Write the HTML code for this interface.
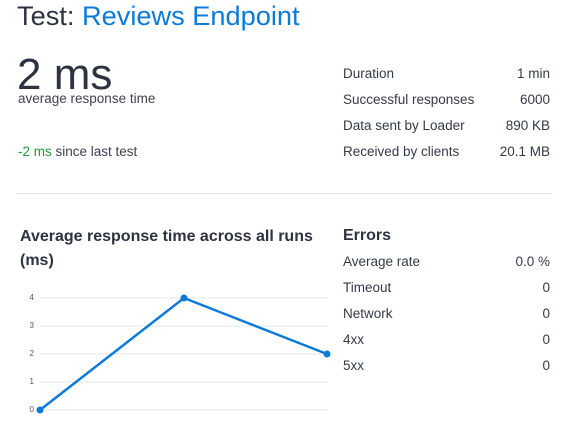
<!DOCTYPE html>
<html><head><meta charset="utf-8"><style>
body{margin:0;width:573px;height:445px;background:#fff;font-family:"Liberation Sans",sans-serif;color:#2d3340;position:relative;overflow:hidden}
.a{position:absolute;white-space:nowrap}
.r{position:absolute;left:343px;width:207px;font-size:13.5px;color:#333a47;display:flex;justify-content:space-between;line-height:16px}
</style></head><body>
<div class="a" style="left:17px;top:-1px;font-size:27.2px;line-height:34px">Test: <span style="color:#0c7bd8">Reviews Endpoint</span></div>
<div class="a" style="left:17px;top:50px;font-size:44px;line-height:50px">2 ms</div>
<div class="a" style="left:18px;top:91px;font-size:13.5px;color:#3d4250">average response time</div>
<div class="a" style="left:18px;top:144px;font-size:13.5px;color:#3d4250"><span style="color:#1f9a3a">-2 ms</span> since last test</div>
<div class="r" style="top:66px"><span>Duration</span><span>1 min</span></div>
<div class="r" style="top:92px"><span>Successful responses</span><span>6000</span></div>
<div class="r" style="top:118px"><span>Data sent by Loader</span><span>890 KB</span></div>
<div class="r" style="top:144px"><span>Received by clients</span><span>20.1 MB</span></div>
<div class="a" style="left:17px;top:193px;width:535px;border-top:1px dotted #ccc"></div>
<div class="a" style="left:20px;top:225px;font-size:16px;font-weight:bold;line-height:24px;white-space:normal;width:310px">Average response time across all runs (ms)</div>
<div class="a" style="left:343px;top:227px;font-size:16px;font-weight:bold">Errors</div>
<div class="r" style="top:254px"><span>Average rate</span><span>0.0 %</span></div>
<div class="r" style="top:280px"><span>Timeout</span><span>0</span></div>
<div class="r" style="top:306px"><span>Network</span><span>0</span></div>
<div class="r" style="top:332px"><span>4xx</span><span>0</span></div>
<div class="r" style="top:358px"><span>5xx</span><span>0</span></div>
<svg class="a" style="left:0;top:0" width="573" height="445">
<g stroke="#e6e6e6" stroke-width="1">
<line x1="40" y1="298" x2="328" y2="298"/><line x1="40" y1="326" x2="328" y2="326"/><line x1="40" y1="354" x2="328" y2="354"/><line x1="40" y1="382" x2="328" y2="382"/><line x1="40" y1="410" x2="328" y2="410"/></g>
<g font-size="8" fill="#555" font-family="Liberation Sans" text-anchor="end">
<text x="34" y="300">4</text><text x="34" y="328">3</text><text x="34" y="356">2</text><text x="34" y="384">1</text><text x="34" y="412">0</text></g>
<polyline points="40,410 184,298 327,354" fill="none" stroke="#0c7bd8" stroke-width="2.5"/>
<g fill="#0c7bd8"><circle cx="40" cy="410" r="3.5"/><circle cx="184" cy="298" r="3.5"/><circle cx="327" cy="354" r="3.5"/></g>
</svg>
</body></html>
